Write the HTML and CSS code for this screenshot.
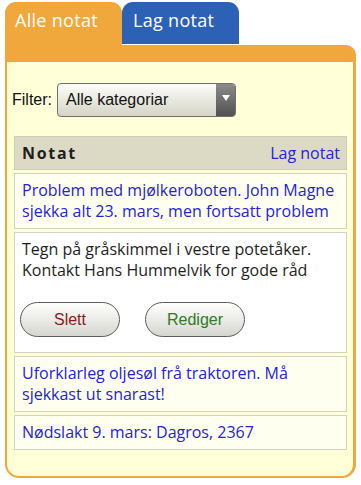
FILE: index.html
```html
<!DOCTYPE html>
<html>
<head>
    <link rel="stylesheet" href="styles.css">
</head>
<body>
    <div class="tabs">
        <div class="tab active">Alle notat</div>
        <div class="tab">Lag notat</div>
    </div>
    <div class="panel">
        <div class="filter">
            <label>Filter:</label>
            <div class="select">
                <span>Alle kategoriar</span>
                <div class="arrow"></div>
            </div>
        </div>

        <div class="list">
            <div class="list-head">
                <span class="title">Notat</span>
                <a class="new-link">Lag notat</a>
            </div>

            <div class="note link">Problem med mjølkeroboten. John Magne sjekka alt 23. mars, men fortsatt problem</div>

            <!-- opened note -->
            <div class="note open">
                <div>Tegn på gråskimmel i vestre potetåker. Kontakt Hans Hummelvik for gode råd</div>
                <div class="buttons">
                    <button class="btn delete">Slett</button>
                    <button class="btn edit">Rediger</button>
                </div>
            </div>

            <div class="note link">Uforklarleg oljesøl frå traktoren. Må sjekkast ut snarast!</div>
            <div class="note link">Nødslakt 9. mars: Dagros, 2367</div>
        </div>
    </div>
</body>
</html>
```

FILE: styles.css
```css
body {
    margin: 0;
    padding: 2px 5px 0 5px;
    background: #fff;
    font-family: "Open Sans", sans-serif;
    width: 351px;
}

.tabs {
    display: flex;
    align-items: flex-start;
}
.tab {
    width: 117px;
    height: 42px;
    margin-bottom: 1px;
    box-sizing: border-box;
    padding: 6px 0 0 11px;
    border-radius: 11px 11px 0 0;
    background: #2c62b6;
    color: #fff;
    font-size: 18px;
    letter-spacing: 0.3px;
}
.tab.active {
    background: #f0a83c;
    height: 43px;
    margin-bottom: 0;
    padding-left: 10px;
}

/* Panel under the tabs */
.panel {
    border: solid #f0a83c;
    border-width: 17px 3px 2px 2px;
    border-radius: 0 10px 14px 14px;
    background: #ffffd8;
    padding: 21px 6px 26px 0;
}

.filter {
    display: flex;
    align-items: center;
    padding-left: 5px;
    font-family: "Liberation Sans", Arial, sans-serif;
    font-size: 16px;
    color: #111;
}
.filter label {
    margin-right: 5px;
}
.select {
    display: flex;
    align-items: center;
    justify-content: space-between;
    width: 179px;
    height: 34px;
    box-sizing: border-box;
    border: 1px solid #6e6e6e;
    border-radius: 4px;
    background: linear-gradient(#fdfdf9, #d5d4c6);
    overflow: hidden;
}
.select span {
    padding-left: 8px;
    color: #111;
}
.select .arrow {
    width: 19px;
    height: 100%;
    background: linear-gradient(#8a8a8a, #525252);
    display: flex;
    align-items: center;
    justify-content: center;
}
.select .arrow::after {
    content: "";
    border-left: 4px solid transparent;
    border-right: 4px solid transparent;
    border-top: 6px solid #fff;
    margin-top: -4px;
}

.list {
    margin: 19px 0 0 7px;
    display: flex;
    flex-direction: column;
    gap: 3px;
}
.list-head {
    display: flex;
    justify-content: space-between;
    align-items: center;
    height: 34px;
    box-sizing: border-box;
    padding: 0 6px 0 7px;
    background: #dcdac4;
    border: 1px solid #cfcdb8;
    font-size: 16px;
}
.list-head .title {
    font-weight: bold;
    letter-spacing: 1.7px;
    color: #1e1e1e;
}
.list-head .new-link {
    color: #2323d8;
}

.note {
    border: 1px solid #d3d2c6;
    background: #fffff0;
    padding: 6px 6px 6px 7px;
    font-size: 16px;
    line-height: 21px;
}
.note.link {
    color: #2323d8;
}
.note.open {
    background: #fff;
    color: #1e1e1e;
    padding-bottom: 15px;
}

.buttons {
    display: flex;
    gap: 25px;
    margin: 21px 0 0 -2px;
}
.btn {
    width: 100px;
    height: 35px;
    border: 1px solid #5c5c5c;
    border-radius: 18px;
    background: linear-gradient(#ffffff, #d6d6d0);
    font-family: "Liberation Sans", Arial, sans-serif;
    font-size: 16px;
    padding: 0;
}
.btn.delete {
    color: #8b1c1c;
}
.btn.edit {
    color: #2f7a25;
}
```
